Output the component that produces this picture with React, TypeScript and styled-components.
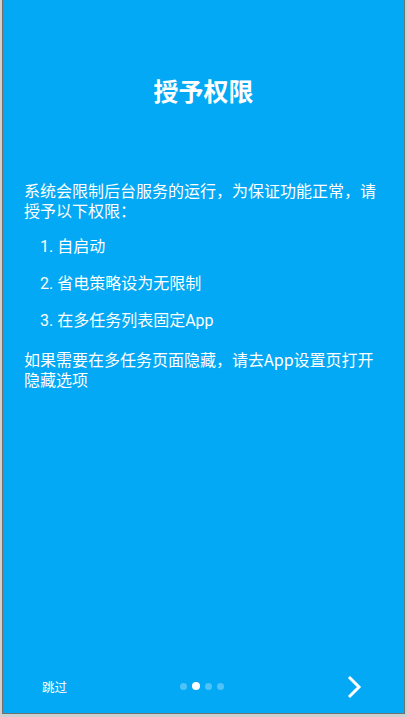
import React from "react";
import styled, { createGlobalStyle } from "styled-components";

const Global = createGlobalStyle`
  html, body {
    margin: 0;
    padding: 0;
    background: #cfcfcf;
    overflow: hidden;
  }
  * { box-sizing: border-box; }
`;

const Frame = styled.div`
  margin-left: 2px;
  width: 403px;
  height: 714px;
  border-left: 1px solid #707070;
  border-right: 1px solid #707070;
  border-bottom: 1px solid #707070;
  background: #03a9f4;
  display: flex;
  flex-direction: column;
  color: #ffffff;
  font-family: "Noto Sans CJK SC", "Roboto", "Noto Sans", sans-serif;
`;

const Title = styled.h1`
  margin: 74px 0 0;
  text-align: center;
  font-size: 25px;
  line-height: 32px;
  font-weight: 700;
`;

const Body = styled.div`
  margin-top: 74px;
  padding: 0 21px;
  font-size: 16px;
  line-height: 20px;
`;

const Para = styled.p`
  margin: 0;
`;

const Item = styled.p`
  margin: 17px 0 0;
  padding-left: 16px;
  font-family: "Roboto", "Noto Sans CJK SC", sans-serif;
`;

const LastPara = styled.p`
  margin: 18px 0 0;
`;

const Footer = styled.div`
  margin-top: auto;
  height: 54px;
  display: grid;
  grid-template-columns: 1fr auto 1fr;
  align-items: center;
  padding: 0 38px 0 38px;
`;

const Skip = styled.span`
  font-size: 12.5px;
  justify-self: start;
  padding-left: 1px;
`;

const Dots = styled.div`
  display: flex;
  align-items: center;
  gap: 5px;
  margin-left: -4px;
`;

const Dot = styled.span<{ $active?: boolean }>`
  width: ${(p) => (p.$active ? 8 : 7)}px;
  height: ${(p) => (p.$active ? 8 : 7)}px;
  border-radius: 50%;
  background: ${(p) => (p.$active ? "#ffffff" : "rgba(255,255,255,0.3)")};
`;

const Next = styled.div`
  justify-self: end;
  display: flex;
  align-items: center;
  margin-top: 2px;
`;

export default function App() {
  return (
    <>
      <Global />
      <Frame>
        <Title>授予权限</Title>
        <Body>
          <Para>系统会限制后台服务的运行，为保证功能正常，请授予以下权限：</Para>
          <Item>1. 自启动</Item>
          <Item>2. 省电策略设为无限制</Item>
          <Item>3. 在多任务列表固定App</Item>
          <LastPara>如果需要在多任务页面隐藏，请去App设置页打开隐藏选项</LastPara>
        </Body>
        <Footer>
          <Skip>跳过</Skip>
          <Dots>
            <Dot />
            <Dot $active />
            <Dot />
            <Dot />
          </Dots>
          <Next>
            <svg width="20" height="24" viewBox="0 0 20 24">
              <polyline
                points="4,3 13,12 4,21"
                fill="none"
                stroke="#ffffff"
                strokeWidth="3"
                strokeLinecap="square"
              />
            </svg>
          </Next>
        </Footer>
      </Frame>
    </>
  );
}
